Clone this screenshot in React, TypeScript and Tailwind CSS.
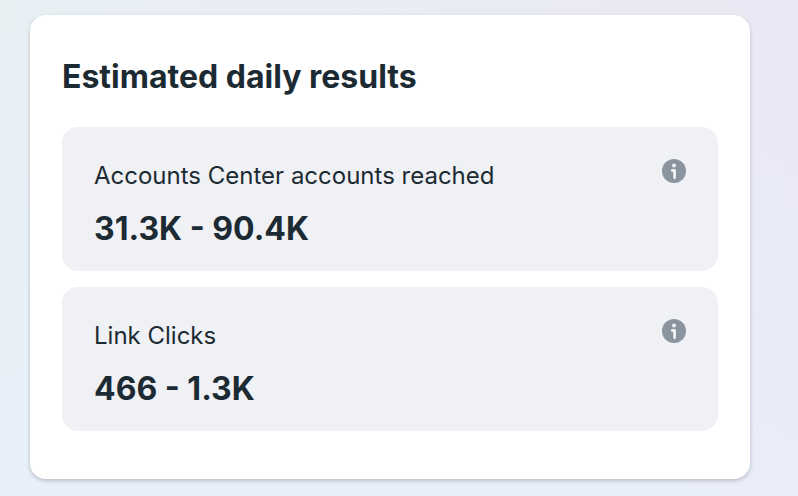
import { useId } from 'react';

interface Estimate {
  label: string;
  range: string;
}

const estimates: Estimate[] = [
  { label: 'Accounts Center accounts reached', range: '31.3K - 90.4K' },
  { label: 'Link Clicks', range: '466 - 1.3K' },
];

function InfoIcon() {
  return (
    <svg viewBox="0 0 24 24" className="size-6" aria-hidden="true">
      <circle cx="12" cy="12" r="12" fill="#8a949f" />
      <circle cx="12" cy="6.4" r="2" fill="#f0f2f5" />
      <path d="M10.3 11.5h2.3v7.3" stroke="#f0f2f5" strokeWidth="2.8" strokeLinecap="round" strokeLinejoin="round" fill="none" />
    </svg>
  );
}

function EstimateCard({ label, range }: Estimate) {
  const labelId = useId();

  return (
    <article className="flex items-start justify-between rounded-2xl bg-[#f0f1f5] px-8 pt-8 pb-[22px]" aria-labelledby={labelId}>
      <div>
        <h3 id={labelId} className="text-2xl leading-[34px] text-[#1c2b33]">{label}</h3>
        <p className="mt-4 text-[32px] leading-10 font-bold text-[#1c2b33]">{range}</p>
      </div>
      <button type="button" aria-label={`About ${label}`} className="shrink-0 rounded-full">
        <InfoIcon />
      </button>
    </article>
  );
}

export default function App() {
  return (
    <main className="min-h-screen bg-linear-to-r from-[#e8f0f4] to-[#eae8f4] font-['Inter',sans-serif]">
      {/* Blue tint that builds up towards the bottom of the page */}
      <div className="min-h-screen bg-linear-to-b from-[#e8f0fc]/0 to-[#e8f0fc]/70 pt-[15px] pr-12 pb-4 pl-[30px]">
        <section className="rounded-2xl bg-white px-8 pt-[42px] pb-12 shadow-[0_2px_4px_rgba(0,0,0,0.2)]">
          <h2 className="text-[32px] leading-10 font-bold text-[#1c2b33]">Estimated daily results</h2>
          <div className="mt-[30px] flex flex-col gap-4">
            {estimates.map((estimate) => (
              <EstimateCard key={estimate.label} {...estimate} />
            ))}
          </div>
        </section>
      </div>
    </main>
  );
}
